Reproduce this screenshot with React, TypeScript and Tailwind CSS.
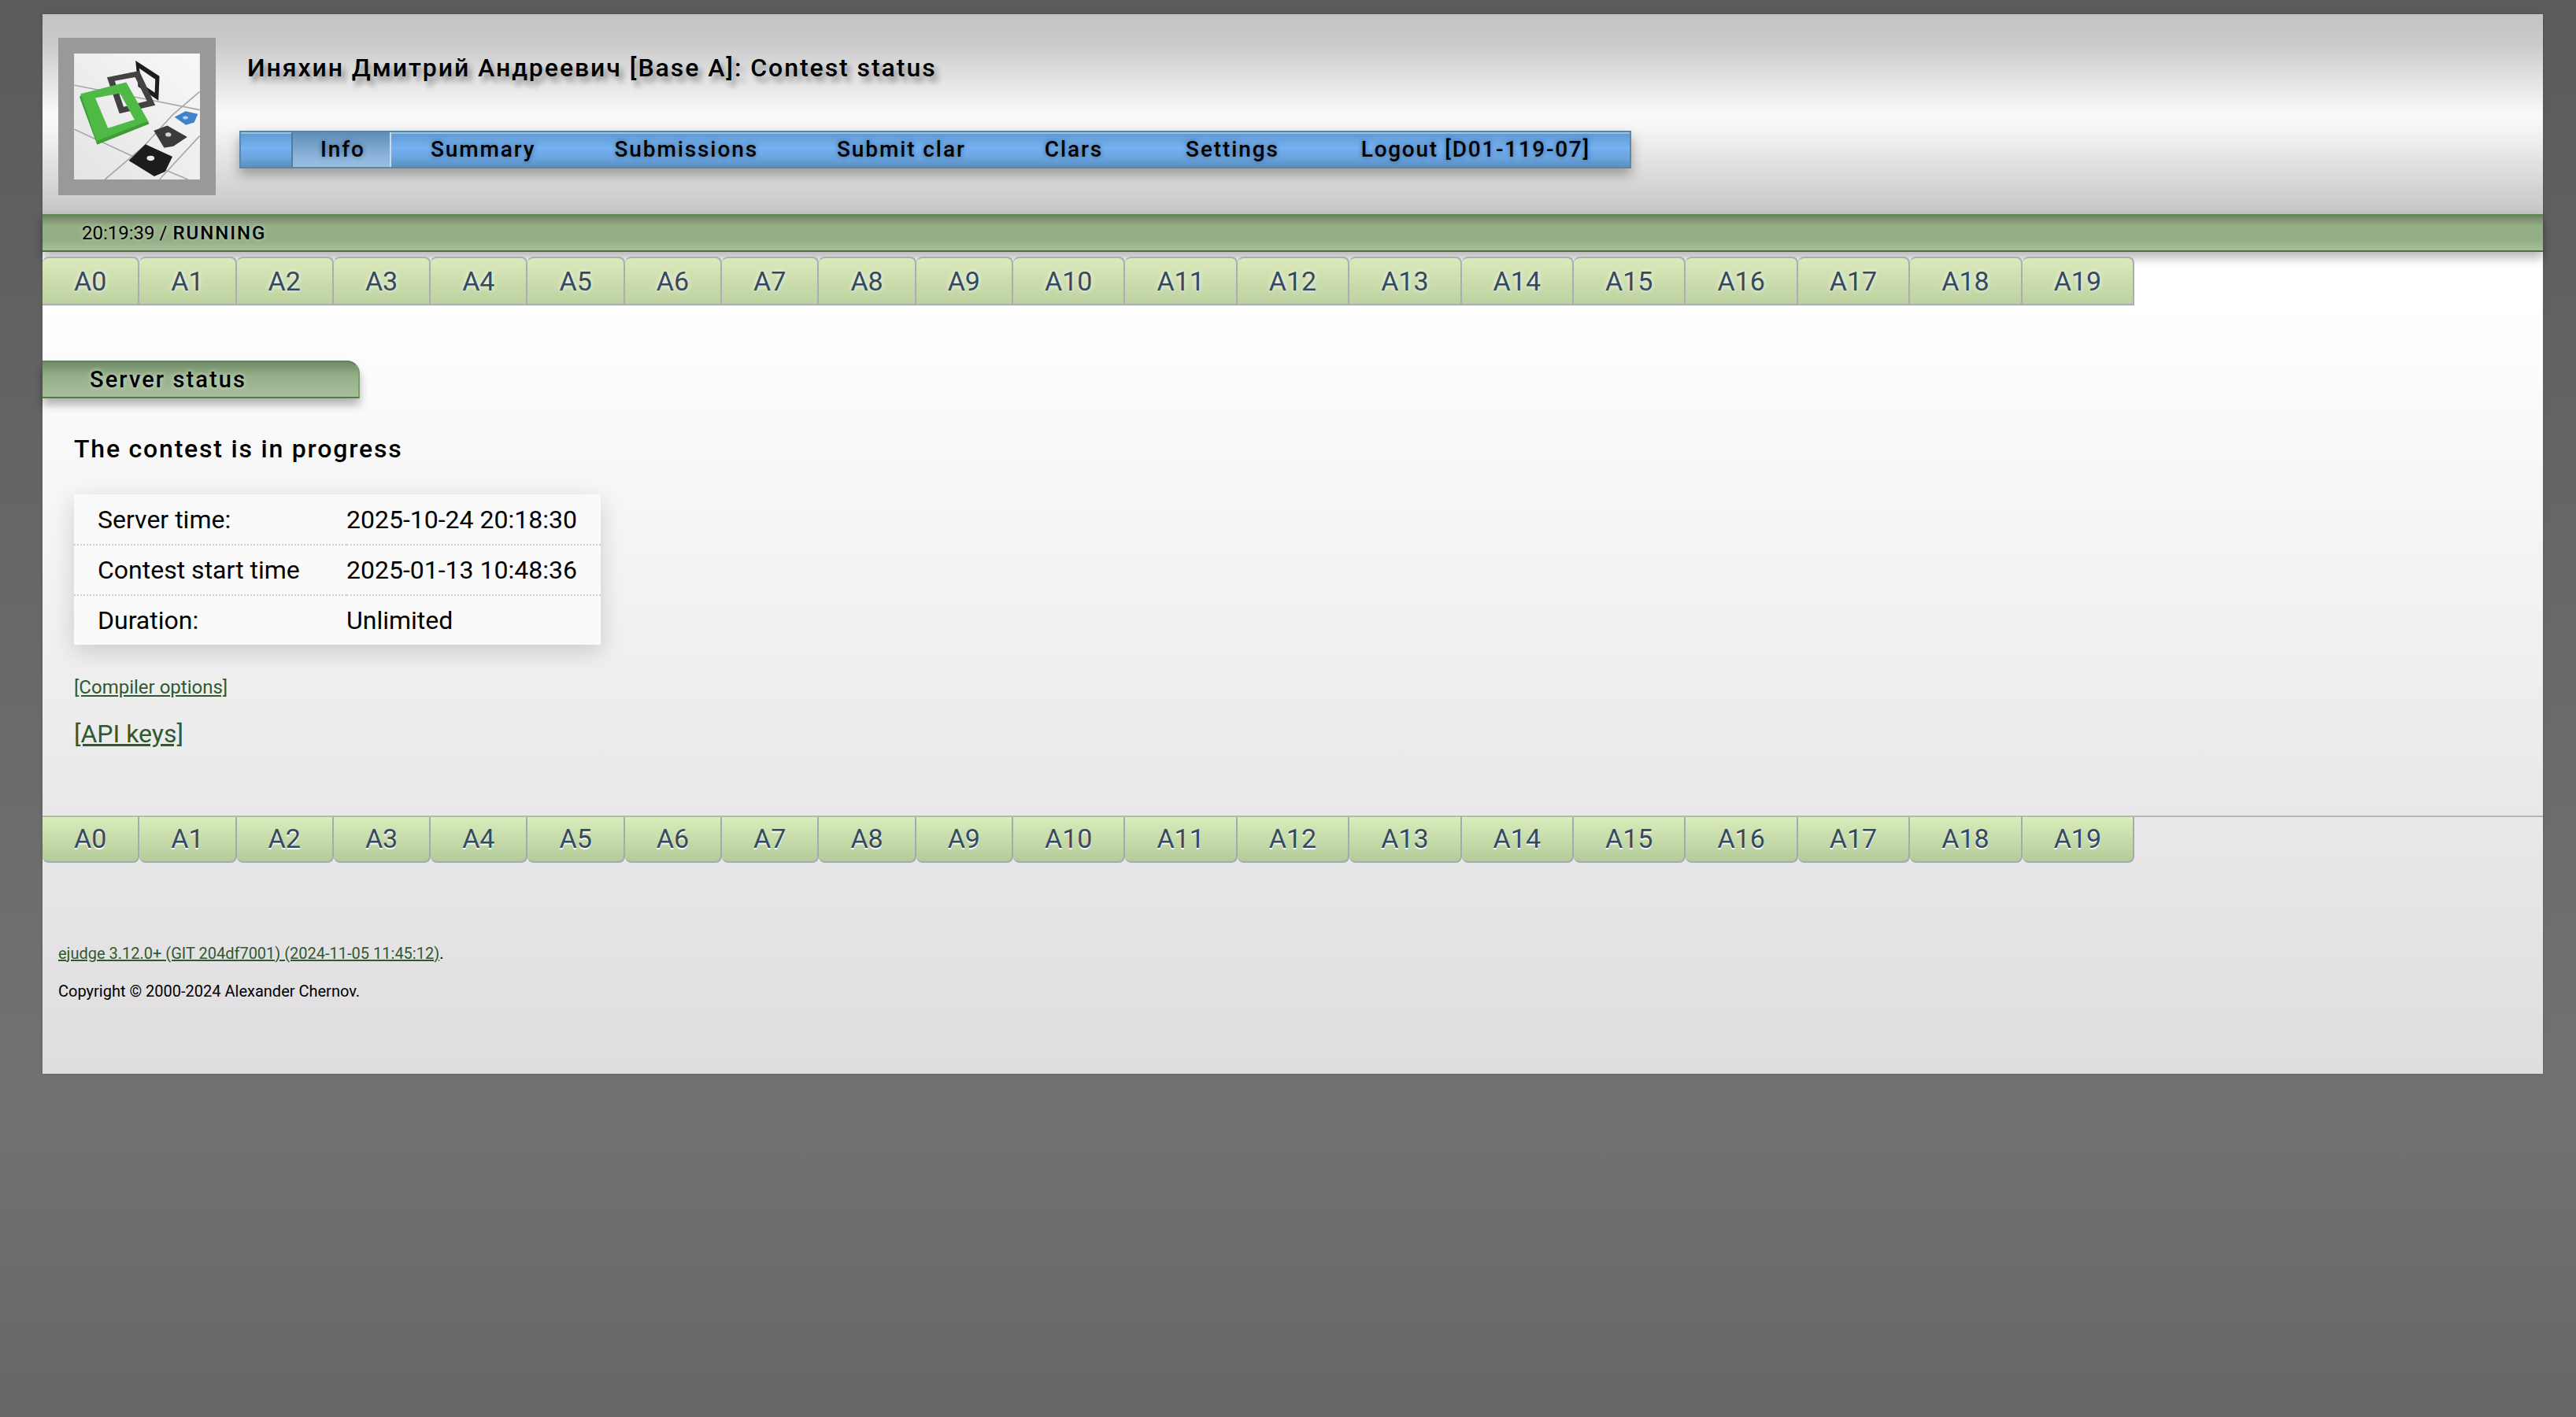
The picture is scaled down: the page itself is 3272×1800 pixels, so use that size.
const navItems = [
  { label: 'Info', active: true },
  { label: 'Summary', extra: 'tracking-[1.9px]' },
  { label: 'Submissions', extra: 'tracking-[1.9px]' },
  { label: 'Submit clar', extra: 'tracking-[1.9px]' },
  { label: 'Clars', extra: 'tracking-[1.9px]' },
  { label: 'Settings', extra: 'ml-[5px] tracking-[1.9px]' },
  { label: 'Logout [D01-119-07]', extra: 'ml-[4px] tracking-[1.7px]' },
];

const problems = Array.from({ length: 20 }, (_, i) => `A${i}`);

const statusRows = [
  ['Server time:', '2025-10-24 20:18:30'],
  ['Contest start time', '2025-01-13 10:48:36'],
  ['Duration:', 'Unlimited'],
];

function Logo() {
  return (
    <svg viewBox="162 113 483 485" className="block h-full w-full">
      <defs>
        <linearGradient id="logoBg" x1="1" y1="0" x2="0" y2="1">
          <stop offset="0" stopColor="#f8f8f8" />
          <stop offset="1" stopColor="#e4e4e4" />
        </linearGradient>
        <filter id="soft">
          <feGaussianBlur stdDeviation="1.6" />
        </filter>
      </defs>
      <rect x="162" y="113" width="483" height="485" fill="url(#logoBg)" />
      <g filter="url(#soft)">
        {/* floor lines */}
        <g stroke="#a8a8a8" strokeWidth="5" fill="none">
          <path d="M162 235 L470 295 L645 330" />
          <path d="M162 405 L400 515 L600 598" />
          <path d="M280 598 L430 470 L540 350 L645 260" />
          <path d="M490 598 L645 430" />
        </g>
        {/* back frames */}
        <path d="M398 140 L490 200 L486 294 L408 240 Z M412 170 L474 212 L472 264 L422 230 Z" fill="#1d1d1d" fillRule="evenodd" />
        <path d="M288 205 L412 180 L474 312 L336 344 Z M318 218 L396 204 L442 296 L352 318 Z" fill="#434343" fillRule="evenodd" />
        {/* green frame */}
        <path d="M182 280 L250 464 L450 384 L446 372 L252 440 L192 270 Z" fill="#3f9c38" />
        <path d="M186 268 L362 224 L446 372 L248 450 Z M243 284 L338 266 L394 368 L292 400 Z" fill="#4fb944" fillRule="evenodd" />
        {/* pieces */}
        <path d="M548 358 L590 335 L638 346 L624 378 L592 388 Z" fill="#3f83cc" />
        <ellipse cx="590" cy="360" rx="10" ry="6" fill="#bcd4ee" />
        <path d="M468 410 L520 390 L597 434 L544 470 L508 476 Z" fill="#3a3a3a" />
        <ellipse cx="524" cy="425" rx="11" ry="8" fill="#d6d6d6" />
        <path d="M372 525 L436 462 L540 510 L512 568 L470 586 Z" fill="#1a1a1a" />
        <ellipse cx="456" cy="516" rx="15" ry="10" fill="#e8e8e8" />
      </g>
    </svg>
  );
}

function Tabs({ bottom }: { bottom?: boolean }) {
  return (
    <ul className={bottom ? 'flex border-t-2 border-[#b4b8ae]' : 'relative z-20 flex'}>
      {problems.map((name) => (
        <li
          key={name}
          className={
            bottom
              ? 'flex h-[58px] items-center border-r-2 border-b-2 border-[#a2aab4] rounded-b-[8px] bg-gradient-to-b from-[#daedbb] to-[#b4cb9a] pb-[2px] pl-[40px] pr-[40px] text-[34px] leading-none text-[#354a60] [text-shadow:0_2px_1px_#ffffff]'
              : 'flex h-[62px] items-center border-t-2 border-r-2 border-b-2 border-[#a9adb6] rounded-t-[8px] bg-gradient-to-b from-[#dbeabb] to-[#bdd1a0] pl-[40px] pr-[40px] text-[34px] leading-none text-[#354a60] [text-shadow:0_0_6px_#ffffff]'
          }
        >
          {name}
        </li>
      ))}
    </ul>
  );
}

export default function App() {
  return (
    <div className="min-h-screen bg-[linear-gradient(180deg,#5b5b5b_0%,#727272_78%,#666666_100%)] pt-[18px] pb-[436px] pl-[54px] pr-[42px] font-['Roboto',sans-serif] text-black">
      <div className="shadow-[0_0_4px_rgba(0,0,0,0.15)]">
        {/* Header */}
        <div className="flex h-[254px] bg-[linear-gradient(180deg,#c3c3c3_0%,#cbcbcb_15%,#fafafa_50%,#f4f4f4_58%,#d0d0d0_90%,#c4c4c4_100%)]">
          <div className="ml-[20px] mt-[30px] h-[200px] w-[200px] border-[20px] border-[#999999]">
            <Logo />
          </div>
          <div className="ml-[30px] flex flex-col">
            <h1 className="mt-[46px] h-[44px] pl-[10px] text-[32px] font-medium leading-[44px] tracking-[1.95px] [text-shadow:5px_7px_7px_rgba(0,0,0,0.38)]">
              Иняхин Дмитрий Андреевич [Base A]: Contest status
            </h1>
            <ul className="mt-[58px] flex h-[48px] border-2 border-[#5a87a3] bg-[linear-gradient(180deg,#6197cc_0%,#75b2f3_45%,#6ba4de_75%,#5a8fc4_100%)] pl-[64px] shadow-[inset_0_2px_0_#9bbfdf,0_8px_14px_rgba(0,0,0,0.3)]">
              {navItems.map((item) => (
                <li
                  key={item.label}
                  className={
                    item.active
                      ? 'flex items-center border-l-2 border-r-2 border-l-[#4f7fa0] border-r-[#c5dcf0] bg-[linear-gradient(180deg,#5f8cb6_0%,#8db5dc_70%,#97bee0_100%)] pl-[35px] pr-[31px] text-[28px] font-medium tracking-[1.9px] [text-shadow:0_0_6px_rgba(10,50,90,0.55)]'
                      : `${item.extra} flex items-center px-[50px] text-[28px] font-medium [text-shadow:0_0_6px_rgba(10,50,90,0.55)]`
                  }
                >
                  {item.label}
                </li>
              ))}
            </ul>
          </div>
        </div>

        {/* Status bar */}
        <div className="relative z-10 flex h-[48px] items-center border-y-2 border-t-[#5a8a4a] border-b-[#4f7044] bg-[linear-gradient(180deg,#6f8365_0%,#95b088_30%,#93ae85_70%,#a8be9c_100%)] pl-[50px] text-[24px] leading-none shadow-[0_8px_12px_rgba(0,0,0,0.28)] [text-shadow:0_0_5px_rgba(255,255,255,0.5)]">
          20:19:39 / <span className="ml-[7px] font-medium tracking-[2px]">RUNNING</span>
        </div>

        {/* Main content */}
        <div className="h-[1044px] bg-[linear-gradient(180deg,#ffffff_0%,#ffffff_6%,#dfdddf_100%)] pt-[6px]">
          <Tabs />

          <div className="mt-[70px] flex h-[48px] w-[403px] items-center rounded-tr-[16px] border-t-2 border-b-2 border-r-2 border-t-[#66835a] border-b-[#4f7f3f] border-r-[#7c9a6e] bg-[linear-gradient(180deg,#728a68_0%,#95b088_40%,#a8be9c_100%)] pl-[60px] pt-[2px] text-[29px] font-medium tracking-[2.1px] shadow-[0_8px_12px_rgba(0,0,0,0.3)] [text-shadow:0_0_6px_rgba(255,255,255,0.7)]">
            Server status
          </div>

          <div className="mt-[42px] pl-[40px]">
            <p className="text-[32px] font-medium leading-[44px] tracking-[1.8px]">The contest is in progress</p>

            <table className="mt-[36px] w-[669px] border-collapse bg-[#fafafa] text-[32px] shadow-[0_8px_28px_rgba(0,0,0,0.16)]">
              <tbody>
                {statusRows.map(([label, value], i) => (
                  <tr key={label} className={i < 2 ? 'h-[64px] border-b-2 border-dotted border-[#d0d0d0]' : 'h-[63px]'}>
                    <td className="w-[346px] pl-[30px]">{label}</td>
                    <td>{value}</td>
                  </tr>
                ))}
              </tbody>
            </table>

            <p className="mt-[38px] text-[24px] leading-[32px] text-[#2f5a2f]">
              <a className="underline">[Compiler options]</a>
            </p>
            <p className="mt-[21px] text-[32px] leading-[44px] text-[#2f5a2f]">
              <a className="underline">[API keys]</a>
            </p>
          </div>

          <div className="mt-[82px]">
            <Tabs bottom />
          </div>

          <div className="mt-[102px] pl-[20px] text-[20px] leading-[26px]">
            <p>
              <a className="text-[#2f5a2f] underline">ejudge 3.12.0+ (GIT 204df7001) (2024-11-05 11:45:12)</a>.
            </p>
            <p className="mt-[22px]">Copyright © 2000-2024 Alexander Chernov.</p>
          </div>
        </div>
      </div>
    </div>
  );
}
